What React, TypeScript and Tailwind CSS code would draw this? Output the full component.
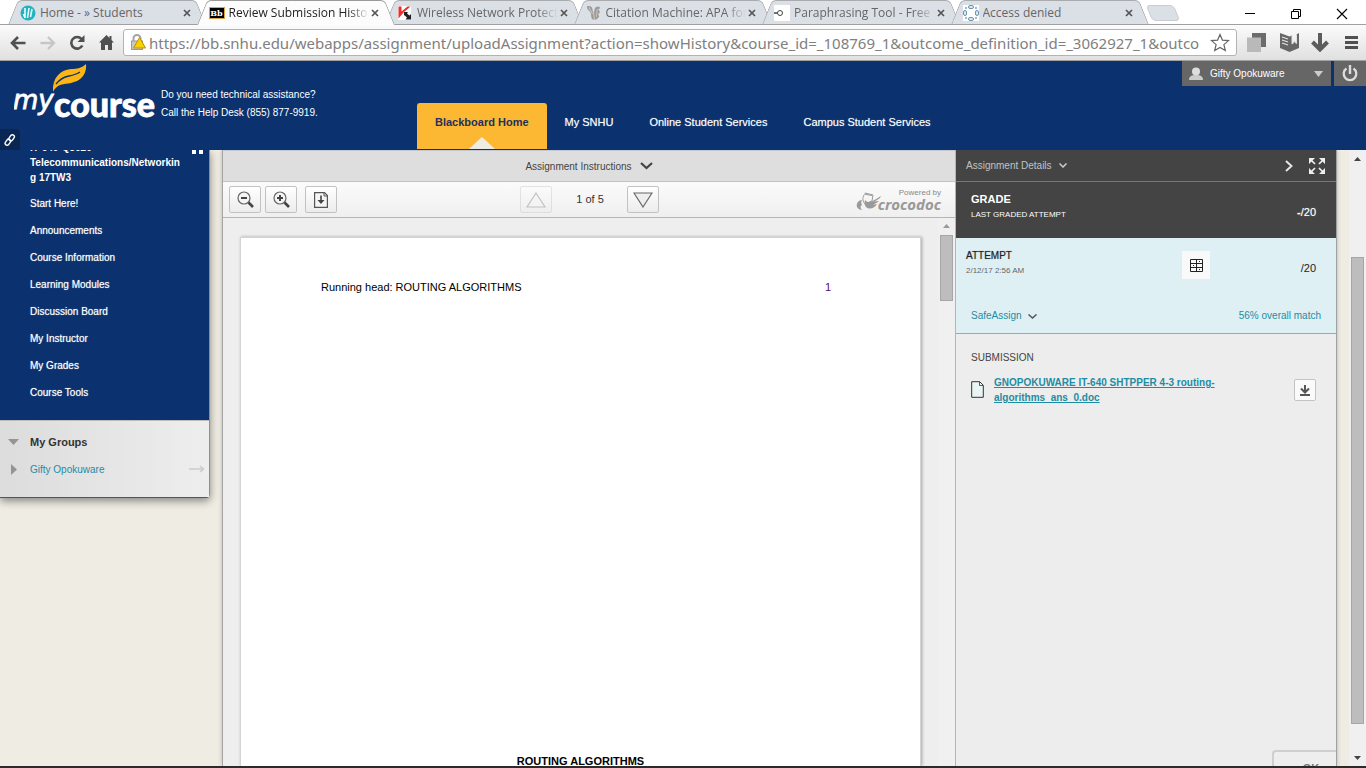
import React from "react";

type TabInfo = { title: string; icon: React.ReactNode; active?: boolean; fade?: boolean };

const pageFont = "font-['Liberation_Sans',Arial,sans-serif]";
const chromeFont = "font-['Open_Sans','Noto_Sans',sans-serif]";

const tabs: TabInfo[] = [
  {
    title: "Home - » Students",
    icon: (
      <svg width="16" height="16" viewBox="0 0 16 16" aria-hidden="true">
        <circle cx="8" cy="8" r="7.5" fill="#22b3bf" />
        <path d="M5 3v10L3.500 9M7.500 13 9 3M10.500 12 12 4" stroke="#e9fbfc" strokeWidth="1.600" fill="none" />
      </svg>
    ),
  },
  {
    title: "Review Submission Histo",
    active: true,
    fade: true,
    icon: (
      <span className="flex h-3 w-4 items-center justify-center border border-[#d9a441] bg-black font-['DejaVu_Serif',serif] text-[8px] font-bold leading-none text-white">
        Bb
      </span>
    ),
  },
  {
    title: "Wireless Network Protect",
    fade: true,
    icon: (
      <svg width="16" height="16" viewBox="0 0 16 16" aria-hidden="true">
        <path d="M1 1h13v14H1z" fill="#fff" />
        <path d="M1.500 1.500h3v5l6-5h3L6.500 7.500l-5 6z" fill="#f02c2c" />
        <path d="M7 7h4l-1 1.500 2.500 2 1.500-1.500v5.500H8.500l1.500-2L7 10z" fill="#222" />
      </svg>
    ),
  },
  {
    title: "Citation Machine: APA for",
    fade: true,
    icon: (
      <svg width="17" height="16" viewBox="0 0 17 16" aria-hidden="true">
        <path d="M1 1c3-1 6 0 6 4l1 4 1-4c0-3 2-4 5-4l1 2-2 1 2 3-2 2 1 3-3 3H7C5 13 6 11 5 8 4 5 1 5 1 1z" fill="#9b9b9b" />
        <path d="M8 7 9 15M12 4l-1 8M3 2l4 7" stroke="#c9c0b8" strokeWidth="1.200" fill="none" />
      </svg>
    ),
  },
  {
    title: "Paraphrasing Tool - Free C",
    fade: true,
    icon: (
      <svg width="16" height="16" viewBox="0 0 16 16" aria-hidden="true">
        <path d="M0 0h16v16H0z" fill="#fff" />
        <circle cx="6" cy="8" r="2.500" fill="none" stroke="#444" />
        <path d="M0 8h3.500" stroke="#444" strokeWidth="1.500" />
      </svg>
    ),
  },
  {
    title: "Access denied",
    icon: (
      <svg width="16" height="16" viewBox="0 0 16 16" aria-hidden="true">
        <path d="M0 0h16v16H0z" fill="#fff" />
        <g fill="#dbeaf3" stroke="#6b93ad" strokeWidth="1">
          <rect x="5.500" y="0.500" width="5" height="3" rx="1.500" />
          <rect x="5.500" y="12.500" width="5" height="3" rx="1.500" />
          <rect x="0.500" y="5.500" width="3" height="5" rx="1.500" />
          <rect x="12.500" y="5.500" width="3" height="5" rx="1.500" />
        </g>
        <g fill="#9dbdd0">
          <circle cx="3" cy="3" r="1.200" />
          <circle cx="13" cy="3" r="1.200" />
          <circle cx="3" cy="13" r="1.200" />
          <circle cx="13" cy="13" r="1.200" />
        </g>
      </svg>
    ),
  },
];

function BrowserTab({ title, icon, active, fade }: TabInfo) {
  const edge = active ? "-bottom-px bg-[#fcfcfc] border-[#9a9a9a]" : "bottom-0 bg-[#dbdfe6] border-[#a9abaf]";
  return (
    <li className={`relative h-6 min-w-0 flex-1 ${active ? "z-10" : ""}`}>
      <span className={`absolute left-0 top-0 w-1/2 -skew-x-[22deg] rounded-tl-[5px] border-l border-t ${edge}`} />
      <span className={`absolute right-0 top-0 w-1/2 skew-x-[22deg] rounded-tr-[5px] border-r border-t ${edge}`} />
      <span className={`absolute inset-x-6 top-px ${active ? "-bottom-px bg-[#fcfcfc]" : "bottom-0 bg-[#dbdfe6]"}`} />
      <div className="relative flex h-full items-center pl-[7px] pr-[9px] pt-0.5">
        <span className="mr-1 flex w-4 shrink-0 justify-center">{icon}</span>
        <span
          className={`min-w-0 flex-1 overflow-hidden whitespace-nowrap text-[12px] leading-5 ${active ? "text-[#222]" : "text-[#666]"} ${fade ? "[mask-image:linear-gradient(to_right,black_85%,transparent)]" : ""}`}
        >
          {title}
        </span>
        <button type="button" aria-label={`Close ${title}`} className="flex size-3 shrink-0 items-center justify-center">
          <svg width="8" height="8" viewBox="0 0 8 8" aria-hidden="true">
            <path d="m1 1 6 6M7 1 1 7" stroke="#555" strokeWidth="1.700" />
          </svg>
        </button>
      </div>
    </li>
  );
}

function BrowserChrome() {
  return (
    <div className={`shrink-0 ${chromeFont}`}>
      <div className="flex h-6 bg-white">
        <ul className="flex w-full max-w-[1144px] pl-[13px]">
          {tabs.map((t) => (
            <BrowserTab key={t.title} {...t} />
          ))}
        </ul>
        <button type="button" aria-label="New tab" className="ml-[5px] mt-[5px] h-4 w-7 shrink-0 skew-x-[22deg] rounded-[4px] border border-[#c9ccd2] bg-[#dbdfe6]" />
        <div className="ml-auto flex items-center gap-[34px] pr-[18px]">
          <button type="button" aria-label="Minimize" className="pt-1">
            <svg width="12" height="12" viewBox="0 0 12 12"><path d="M1 5.500h10" stroke="#000" /></svg>
          </button>
          <button type="button" aria-label="Restore" className="pt-1">
            <svg width="12" height="12" viewBox="0 0 12 12"><path d="M1.500 3.500h7v7h-7zM3.500 3V1.500h7v7H9" fill="none" stroke="#000" /></svg>
          </button>
          <button type="button" aria-label="Close window" className="pt-1">
            <svg width="12" height="12" viewBox="0 0 12 12"><path d="m1 1 10 10M11 1 1 11" stroke="#000" strokeWidth="1.100" /></svg>
          </button>
        </div>
      </div>
      <div className="flex h-[37px] items-center border-b border-t border-b-[#a2a2a2] border-t-[#a0a0a0] bg-gradient-to-b from-[#fbfbfb] to-[#e0e0e0] pl-2.5 pr-2">
        <div className="flex w-[113px] items-center gap-3.5">
          <button type="button" aria-label="Back">
            <svg width="16" height="14" viewBox="0 0 16 14"><path d="M8 1 2 7l6 6M2 7h13.500" fill="none" stroke="#505050" strokeWidth="2.600" /></svg>
          </button>
          <button type="button" aria-label="Forward">
            <svg width="16" height="14" viewBox="0 0 16 14"><path d="m8 1 6 6-6 6M14 7H.5" fill="none" stroke="#c6c6c6" strokeWidth="2.300" /></svg>
          </button>
          <button type="button" aria-label="Reload">
            <svg width="15" height="16" viewBox="0 0 15 16"><path d="M12.300 10.500A5.800 5.800 0 1 1 11.500 4" fill="none" stroke="#505050" strokeWidth="2.600" /><path d="M14.500 0v7h-7z" fill="#505050" /></svg>
          </button>
          <button type="button" aria-label="Home">
            <svg width="15" height="15" viewBox="0 0 15 15"><path d="M7.500 0 0 7.500h2V15h4v-5h3v5h4V7.500h2L12.500 5V1h-2v2z" fill="#505050" /></svg>
          </button>
        </div>
        <div className="flex h-[27px] min-w-0 flex-1 items-center rounded-[3px] border border-[#b3b3b3] bg-white px-1.5">
          <svg width="17" height="17" viewBox="0 0 17 17" className="mr-0.5 shrink-0" aria-hidden="true">
            <path d="M3.500 8V4.500a3.500 3.500 0 0 1 7 0V8" fill="none" stroke="#a5a5a5" strokeWidth="2" />
            <rect x="1.500" y="7" width="11" height="8.500" fill="#c8c8c8" stroke="#9a9a9a" />
            <path d="M9.500 3.500 15.500 14h-12z" fill="#f6d200" stroke="#c48d00" />
          </svg>
          <label htmlFor="address" className="sr-only">Address</label>
          <div className="relative min-w-0 flex-1 font-['Noto_Sans','Open_Sans',sans-serif] text-[15px] leading-6">
            <input
              id="address"
              readOnly
              className="h-6 w-full bg-transparent text-[#808080] outline-none"
              value="https://bb.snhu.edu/webapps/assignment/uploadAssignment?action=showHistory&course_id=_108769_1&outcome_definition_id=_3062927_1&outco"
            />
          </div>
          <button type="button" aria-label="Bookmark" className="shrink-0">
            <svg width="20" height="19" viewBox="0 0 20 19"><path d="m10 1.500 2.400 5.600 6.100.5-4.600 4 1.400 6-5.300-3.200-5.300 3.200 1.400-6-4.600-4 6.100-.5z" fill="#fff" stroke="#666" strokeWidth="1.200" /></svg>
          </button>
        </div>
        <div className="ml-2.5 flex items-center gap-3.5">
          <button type="button" aria-label="Pages">
            <svg width="19" height="19" viewBox="0 0 19 19"><path d="M5 0h14v14H5z" fill="#6b6b6b" /><path d="M0 4.500h14V19H0z" fill="#b9b9b9" /></svg>
          </button>
          <button type="button" aria-label="Reader">
            <svg width="19" height="19" viewBox="0 0 19 19"><path d="M0 0 9.500 3.500 12 2.500v8l2.500-2 2 1.500V1.500L19 0v15l-9.500 4L0 15z" fill="#666" /><path d="m2 4 6 2M2 7l6 2M2 10l6 2" stroke="#e4e4e4" strokeWidth="1.200" /><path d="M12 2.500v8.500l2.500-2 2 1.500V2" fill="none" stroke="#e4e4e4" /></svg>
          </button>
          <button type="button" aria-label="Downloads" className="-ml-0.5">
            <svg width="18" height="19" viewBox="0 0 18 19"><path d="M9 0v16M1.500 9 9 16.500 16.500 9" fill="none" stroke="#5c5c5c" strokeWidth="4" /></svg>
          </button>
          <button type="button" aria-label="Menu" className="ml-0.5">
            <svg width="13" height="13" viewBox="0 0 13 13"><path d="M0 1.500h13M0 6.500h13M0 11.500h13" stroke="#505050" strokeWidth="3" /></svg>
          </button>
        </div>
      </div>
    </div>
  );
}

function Logo() {
  return (
    <svg width="146" height="62" viewBox="0 0 146 62" role="img" aria-label="myCourse" className="shrink-0">
      <text x="-1" y="45" fontFamily="DejaVu Sans, sans-serif" fontStyle="italic" fontSize="26" fill="#fff" stroke="#fff" strokeWidth="0.800">my</text>
      <text x="40" y="53" fontFamily="Lato, sans-serif" fontWeight="900" fontSize="34" fill="#fff" stroke="#fff" strokeWidth="0.800">course</text>
      <path d="M39 28C38 14 46 6 57 5c6 0 11-1 15-5 1 7-3 16-12 18-8 3-14 0-20 8z" fill="#fcb514" />
      <path d="M42 20c4-5 8-7 13-8 5-1 8-2 11-4" fill="none" stroke="#0b326e" strokeWidth="1.300" />
    </svg>
  );
}

const navItems = ["Blackboard Home", "My SNHU", "Online Student Services", "Campus Student Services"];

function Header() {
  return (
    <header className="relative flex h-[89px] shrink-0 bg-[#0b326e] text-white">
      <div className="flex w-[417px] shrink-0 items-start gap-px pl-[14px] pt-[3px]">
        <Logo />
        <p className="whitespace-nowrap pt-[22px] text-[10px] leading-[18px]">
          Do you need technical assistance?
          <br />
          Call the Help Desk (855) 877-9919.
        </p>
      </div>
      <button type="button" aria-label="Quick links" className="absolute bottom-0 left-0 flex h-[21px] w-5 items-center justify-center rounded-tr bg-[#0a2753]">
        <svg width="12" height="12" viewBox="0 0 12 12"><g fill="none" stroke="#fff" strokeWidth="1.400"><rect x="5.500" y="0.500" width="4" height="6.500" rx="2" transform="rotate(35 7.500 4)" /><rect x="2" y="5" width="4" height="6.500" rx="2" transform="rotate(35 4 8)" /></g></svg>
      </button>
      <nav className="flex items-end">
        {navItems.map((n, i) => (
          <a
            key={n}
            href="#nav"
            className={`relative mb-px flex h-[46px] items-center justify-center whitespace-nowrap px-[18px] pb-2 text-[11px] ${i === 0 ? "rounded-t-[3px] bg-[#fdb833] font-bold text-[#23305c]" : "text-white [text-shadow:0_0_1px_#ffffff80]"}`}
          >
            {n}
            {i === 0 && <span className="absolute bottom-0 left-1/2 size-0 -translate-x-1/2 border-x-[13px] border-b-[12px] border-x-transparent border-b-[#efece3]" />}
          </a>
        ))}
      </nav>
      <div className="ml-auto flex h-[25px] gap-[3px]">
        <button type="button" className="flex w-[149px] items-center bg-[#666] pl-[7px] pr-2 text-[10px]">
          <svg width="14" height="14" viewBox="0 0 14 14" className="mr-[7px]" aria-hidden="true"><circle cx="7" cy="4.500" r="4" fill="#ddd" /><path d="M0 13c0-4 3-5 7-5s7 1 7 5z" fill="#ccc" /></svg>
          Gifty Opokuware
          <svg width="9" height="6" viewBox="0 0 9 6" className="ml-auto" aria-hidden="true"><path d="M0 0h9L4.500 6z" fill="#ccc" /></svg>
        </button>
        <button type="button" aria-label="Log out" className="flex w-8 items-center justify-center bg-[#666]">
          <svg width="16" height="17" viewBox="0 0 16 17"><path d="M4.500 3.500a6.300 6.300 0 1 0 7 0" fill="none" stroke="#ddd" strokeWidth="2.300" /><path d="M8 0v9" stroke="#ddd" strokeWidth="2.400" /></svg>
        </button>
      </div>
    </header>
  );
}

const courseLinks = ["Start Here!", "Announcements", "Course Information", "Learning Modules", "Discussion Board", "My Instructor", "My Grades", "Course Tools"];

function Sidebar() {
  return (
    <aside className="flex w-[210px] shrink-0 flex-col self-start rounded-br-[4px] border-b border-r border-b-[#555] border-r-[#8a8f99] shadow-[0_3px_8px_#00000070]">
      <div className="h-[270px] overflow-hidden bg-[#0b326e] text-[10px] text-white">
        <div className="-mt-2.5 flex items-start justify-between pr-1.5">
          <h2 className="w-[184px] shrink-0 pl-[30px] font-bold leading-[15px]">
            IT-640-Q3620
            <span className="block break-all">Telecommunications/Networking 17TW3</span>
          </h2>
          <span className="mt-2.5 flex shrink-0 gap-[3px]">
            <span className="size-1 bg-white" />
            <span className="size-1 bg-white" />
          </span>
        </div>
        <ul className="pt-[5px]">
          {courseLinks.map((l) => (
            <li key={l} className="h-[27px] pl-[30px] leading-[27px] [text-shadow:0_0_1px_#ffffffa0]">
              <a href="#course">{l}</a>
            </li>
          ))}
        </ul>
      </div>
      <div className="h-[77px] border-t border-[#bbb] bg-gradient-to-r from-[#dcdcdc] to-[#eee] pt-[7px]">
        <div className="flex h-7 items-center pl-2">
          <svg width="11" height="6" viewBox="0 0 11 6" aria-hidden="true"><path d="M0 0h11L5.500 6z" fill="#949494" /></svg>
          <h3 className="pl-[11px] text-[11px] font-bold text-[#333]">My Groups</h3>
        </div>
        <div className="flex h-[26px] items-center pl-[11px] pr-1">
          <svg width="6" height="11" viewBox="0 0 6 11" aria-hidden="true"><path d="M0 0v11l6-5.500z" fill="#949494" /></svg>
          <a href="#group" className="pl-[13px] text-[10px] text-[#1f8ca3]">Gifty Opokuware</a>
          <svg width="16" height="8" viewBox="0 0 16 8" className="ml-auto" aria-hidden="true"><path d="M0 4h14M11 1l3.500 3L11 7" fill="none" stroke="#ccc" strokeWidth="1.600" /></svg>
        </div>
      </div>
    </aside>
  );
}

const toolButton = "flex h-[27px] w-8 items-center justify-center rounded-[2px] border border-[#c2c2c2] bg-gradient-to-b from-white to-[#ececec]";

function Zoom({ plus }: { plus?: boolean }) {
  return (
    <svg width="17" height="17" viewBox="0 0 17 17" aria-hidden="true">
      <circle cx="7" cy="7" r="6" fill="#f5f5f5" stroke="#666" strokeWidth="1.200" />
      <path d="M4 7h6" stroke="#444" strokeWidth="2" />
      {plus && <path d="M7 4v6" stroke="#444" strokeWidth="2" />}
      <path d="m11.500 11.500 4.500 4.500" stroke="#444" strokeWidth="2.600" />
    </svg>
  );
}

function Viewer() {
  return (
    <main className="flex min-w-0 flex-1 flex-col border-l border-[#a5a5a5] bg-[#eee] text-[#333]">
      <button type="button" className="flex h-8 shrink-0 items-center justify-center gap-2 border-b border-t border-b-[#c3c3c3] border-t-[#c3c8d2] bg-[#dedede] text-[10px] text-[#444]">
        Assignment Instructions
        <svg width="13" height="8" viewBox="0 0 13 8" aria-hidden="true"><path d="m1 1 5.500 5L12 1" fill="none" stroke="#444" strokeWidth="2.200" /></svg>
      </button>
      <div className="grid h-9 shrink-0 grid-cols-[1fr_auto_1fr] items-center border-b border-[#b5b5b5] bg-gradient-to-b from-[#fbfbfb] to-[#efefef] px-1.5">
        <div className="flex gap-1">
          <button type="button" aria-label="Zoom out" className={toolButton}><Zoom /></button>
          <button type="button" aria-label="Zoom in" className={toolButton}><Zoom plus /></button>
          <button type="button" aria-label="Download" className={`ml-1 ${toolButton}`}>
            <svg width="14" height="16" viewBox="0 0 14 16"><path d="M.6.6h9.900l2.900 2.900v11.900H.6z" fill="#f5f5f5" stroke="#555" strokeWidth="1.200" /><path d="M10 1v3h3" fill="none" stroke="#555" /><path d="M7 3.500v7" stroke="#444" strokeWidth="1.600" /><path d="M3.500 8h7L7 12z" fill="#444" /></svg>
          </button>
        </div>
        <div className="flex items-center">
          <button type="button" aria-label="Previous page" disabled className={`opacity-40 ${toolButton}`}>
            <svg width="20" height="16" viewBox="0 0 20 16"><path d="M10 1 19 15H1z" fill="#f4f4f4" stroke="#777" strokeWidth="1.200" /></svg>
          </button>
          <span className="w-[75px] pl-0.5 text-center text-[11px]">1 of 5</span>
          <button type="button" aria-label="Next page" className={toolButton}>
            <svg width="20" height="16" viewBox="0 0 20 16"><path d="M10 15 19 1H1z" fill="#eee" stroke="#666" strokeWidth="1.200" /></svg>
          </button>
        </div>
        <div className="flex items-end justify-end pr-2">
          <svg width="26" height="20" viewBox="0 0 26 20" className="-mr-1" aria-hidden="true">
            <path d="M6 8C2 8 0 12 1 15c1 2 3 3 5 3-2-2-2-4 0-5-1-2-1-3 0-5z" fill="#999" />
            <path d="M8 3c-2 3-1 7 1 9M8 2l8 1.500M9 1l8 2-1 6-5 2" fill="none" stroke="#999" />
            <path d="M9 8c4 5 9 0 16-4-1 3-4 4-7 5.500L23 9c-2 2-4 3-6 3.500l4-.3c-3 4-6 5-9 4-3-1-4-4-3-8.200z" fill="#999" />
          </svg>
          <div className="flex flex-col items-end">
            <span className="text-[8px] leading-[9px] text-[#888]">Powered by</span>
            <span className="font-['Open_Sans',sans-serif] text-[15px] font-bold italic leading-[15px] text-[#999]">crocodoc</span>
          </div>
        </div>
      </div>
      <div className="flex min-h-0 flex-1">
        <div className="min-w-0 flex-1 px-[17px] pt-[19px]">
          <article className="flex h-full flex-col border border-b-0 border-[#d4d4d4] bg-white px-20 text-[11px] text-black shadow-[1px_0_3px_#00000050]">
            <div className="flex justify-between pr-[9px] pt-[39px] leading-5">
              <span>Running head: ROUTING ALGORITHMS</span>
              <span className="text-[#5c0a6d]">1</span>
            </div>
            <h1 className="mt-auto h-[15px] overflow-visible text-center font-bold leading-5">ROUTING ALGORITHMS</h1>
          </article>
        </div>
        <div className="flex w-[17px] flex-col items-center bg-[#f0f0f0] pt-1.5">
          <svg width="7" height="4" viewBox="0 0 7 4" aria-hidden="true"><path d="M3.500 0 7 4H0z" fill="#999" /></svg>
          <div className="mt-[7px] h-[66px] w-[13px] border border-[#a6a6a6] bg-[#bdbdbd]" />
        </div>
      </div>
    </main>
  );
}

function Details() {
  return (
    <section className="flex w-[382px] shrink-0 flex-col border-l border-r border-[#b5b5b5] border-r-[#9fa3a6] bg-[#ededed]">
      <div className="flex h-8 shrink-0 items-center border-b border-[#777] bg-[#444] pl-2.5 pr-[11px]">
        <button type="button" className="flex items-center gap-[7px] text-[10px] text-[#c2c2c2]">
          Assignment Details
          <svg width="8" height="5" viewBox="0 0 8 5" aria-hidden="true"><path d="m.5.5 3.500 3.500L7.500.5" fill="none" stroke="#ccc" strokeWidth="1.500" /></svg>
        </button>
        <button type="button" aria-label="Collapse" className="ml-auto mr-4">
          <svg width="8" height="12" viewBox="0 0 8 12"><path d="m1 1 5.500 5L1 11" fill="none" stroke="#e8e8e8" strokeWidth="1.900" /></svg>
        </button>
        <button type="button" aria-label="Full screen">
          <svg width="16" height="16" viewBox="0 0 16 16"><path d="M0 0h6L0 6zM16 0h-6l6 6zM0 16h6l-6-6zM16 16h-6l6-6z" fill="#eee" /><path d="m1 1 5 5M15 1l-5 5M1 15l5-5M15 15l-5-5" stroke="#eee" strokeWidth="1.700" /></svg>
        </button>
      </div>
      <div className="flex h-14 shrink-0 items-center justify-between bg-[#444] pl-[15px] pr-5 text-white">
        <div className="pb-1.5">
          <h2 className="text-[11px] font-bold leading-[15px]">GRADE</h2>
          <p className="text-[8px] leading-[15px]">LAST GRADED ATTEMPT</p>
        </div>
        <span className="pt-1 text-[11px] [text-shadow:0_0_1px_#ffffff80]"><b>-</b>/20</span>
      </div>
      <div className="flex h-24 shrink-0 flex-col border-b border-[#a5a5a5] bg-[#dff0f5]">
        <div className="flex h-[68px] items-start pl-2.5 pr-5 pt-2.5">
          <div className="w-[216px]">
            <h2 className="text-[10px] leading-[15px] text-[#222] [text-shadow:0_0_1px_#22222280]">ATTEMPT</h2>
            <p className="text-[8px] leading-[15px] text-[#666]">2/12/17 2:56 AM</p>
          </div>
          <button type="button" aria-label="View rubric" className="mt-[3px] flex size-7 items-center justify-center bg-[#f9f9f9]">
            <svg width="13" height="13" viewBox="0 0 13 13"><path d="M.5.5h12v12H.5zM.5 4.500h12M.5 8.500h12M6.500 0v13" fill="none" stroke="#222" /><path d="M9 2h1v1H9zM3 6h1v1H3zM9 10h1v1H9z" fill="#222" /></svg>
          </button>
          <span className="ml-auto pt-3 text-[11px] leading-4 text-[#222]">/20</span>
        </div>
        <div className="flex items-center justify-between px-[15px] text-[10px] leading-5 text-[#1f8ca3]">
          <button type="button" className="flex items-center gap-1.5">
            SafeAssign
            <svg width="9" height="5" viewBox="0 0 9 5" aria-hidden="true"><path d="m.5.5 4 3.500 4-3.500" fill="none" stroke="#555" strokeWidth="1.500" /></svg>
          </button>
          <a href="#match">56% overall match</a>
        </div>
      </div>
      <div className="px-[15px] pt-4">
        <h3 className="text-[10px] leading-4 text-[#444]">SUBMISSION</h3>
        <div className="flex items-start pr-[5px] pt-[9px]">
          <svg width="13" height="17" viewBox="0 0 13 17" className="mt-1.5 shrink-0" aria-hidden="true"><path d="M.7.7h8l3.600 3.600v12H.7z" fill="#e9f5f3" stroke="#333" /><path d="M8.500 1v3.500H12" fill="none" stroke="#333" strokeWidth=".8" /></svg>
          <a href="#file" className="ml-2.5 w-[240px] text-[10px] font-bold leading-[15px] text-[#1f8ca3] underline">
            GNOPOKUWARE IT-640 SHTPPER 4-3 routing-algorithms_ans_0.doc
          </a>
          <button type="button" aria-label="Download file" className="ml-auto mt-1 flex size-[22px] items-center justify-center rounded-[2px] border border-[#c4c4c4] bg-[#fafafa]">
            <svg width="10" height="11" viewBox="0 0 10 11"><path d="M5 0v6M0 10h10" stroke="#555" strokeWidth="2" fill="none" /><path d="m1 3.500 4 4 4-4" stroke="#555" strokeWidth="2" fill="none" /></svg>
          </button>
        </div>
      </div>
      <button type="button" className="mt-auto flex h-4 w-16 items-start justify-center self-end overflow-hidden rounded-tl-[4px] border-l-2 border-t-2 border-[#cfcfcf] bg-[#eee] pl-3 pt-2 text-[11px] font-bold leading-4 text-[#777]">
        OK
      </button>
    </section>
  );
}

export default function App() {
  return (
    <div className={`flex h-screen flex-col overflow-hidden bg-[#efece3] ${pageFont}`}>
      <BrowserChrome />
      <Header />
      <div className="flex min-h-0 flex-1">
        <Sidebar />
        <div className="ml-3 flex min-w-0 flex-1 shadow-[0_0_4px_#00000040]">
          <Viewer />
          <Details />
        </div>
        <div className="ml-3 flex w-[17px] flex-col items-center bg-[#f0f0f0] pb-1.5 pt-[7px]">
          <svg width="7" height="4" viewBox="0 0 7 4" aria-hidden="true"><path d="M3.500 0 7 4H0z" fill="#444" /></svg>
          <div className="mb-8 mt-24 w-[13px] flex-1 border border-[#a6a6a6] bg-[#bdbdbd]" />
          <svg width="7" height="4" viewBox="0 0 7 4" aria-hidden="true"><path d="M3.500 4 7 0H0z" fill="#444" /></svg>
        </div>
      </div>
      <div className="h-0.5 shrink-0 bg-[#2b2b2b]" />
    </div>
  );
}
